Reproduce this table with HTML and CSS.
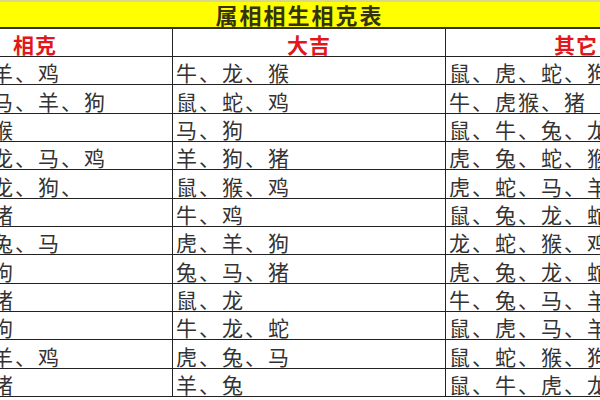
FILE: index.html
```html
<!DOCTYPE html>
<html lang="zh-CN">
<head>
<meta charset="utf-8">
<title>属相相生相克表</title>
<link rel="stylesheet" href="styles.css">
</head>
<body>
<table class="chart">
  <colgroup>
    <col class="c1"><col class="c2"><col class="c3">
  </colgroup>
  <thead>
    <tr class="title-row"><th colspan="3" class="title">属相相生相克表</th></tr>
    <tr class="head-row">
      <th class="h1">相克</th>
      <th class="h2">大吉</th>
      <th class="h3">其它</th>
    </tr>
  </thead>
  <tbody>
    <tr><td>羊、鸡</td><td>牛、龙、猴</td><td>鼠、虎、蛇、狗</td></tr>
    <tr><td>马、羊、狗</td><td>鼠、蛇、鸡</td><td>牛、虎猴、猪</td></tr>
    <tr><td>猴</td><td>马、狗</td><td>鼠、牛、兔、龙</td></tr>
    <tr><td>龙、马、鸡</td><td>羊、狗、猪</td><td>虎、兔、蛇、猴</td></tr>
    <tr><td>龙、狗、</td><td>鼠、猴、鸡</td><td>虎、蛇、马、羊</td></tr>
    <tr><td>猪</td><td>牛、鸡</td><td>鼠、兔、龙、蛇</td></tr>
    <tr><td>兔、马</td><td>虎、羊、狗</td><td>龙、蛇、猴、鸡</td></tr>
    <tr><td>狗</td><td>兔、马、猪</td><td>虎、兔、龙、蛇</td></tr>
    <tr><td>猪</td><td>鼠、龙</td><td>牛、兔、马、羊</td></tr>
    <tr><td>狗</td><td>牛、龙、蛇</td><td>鼠、虎、马、羊</td></tr>
    <tr><td>羊、鸡</td><td>虎、兔、马</td><td>鼠、蛇、猴、狗</td></tr>
    <tr><td>猪</td><td>羊、兔</td><td>鼠、牛、虎、龙</td></tr>
  </tbody>
</table>
</body>
</html>
```

FILE: styles.css
```css
html, body {
  margin: 0;
  padding: 0;
  background: #ffffff;
  overflow: hidden;
  width: 600px;
  height: 400px;
}

.chart {
  margin-left: -12px;
  border-collapse: collapse;
  table-layout: fixed;
  width: 757px;
  font-family: "Noto Sans CJK SC", "Noto Sans", sans-serif;
}

.c1 { width: 184px; }
.c2 { width: 273px; }
.c3 { width: 300px; }

.title-row th {
  background: #ffff00;
  height: 25px;
  border-top: 2px solid #d9d98c;
  border-bottom: 2px solid #333322;
  padding: 0 0 0 227px;
  text-align: left;
  font-size: 22px;
  font-weight: 700;
  letter-spacing: 2px;
  line-height: 25px;
  color: #35330f;
  vertical-align: bottom;
}

.head-row th {
  height: 27px;
  padding: 0;
  border: 1px solid #222;
  border-top: none;
  color: #e3161c;
  font-size: 21px;
  font-weight: 700;
  letter-spacing: 1px;
  line-height: 24px;
  vertical-align: bottom;
}

.head-row .h1 { text-align: left; padding-left: 24px; }
.head-row .h2 { text-align: center; }
.head-row .h3 { text-align: left; padding-left: 108px; }

tbody td {
  height: 27.33px;
  padding: 0 0 0 3px;
  border: 1px solid #222;
  color: #333;
  font-size: 21px;
  font-weight: 400;
  letter-spacing: 2px;
  line-height: 24px;
  vertical-align: bottom;
  white-space: nowrap;
  overflow: hidden;
}
```
